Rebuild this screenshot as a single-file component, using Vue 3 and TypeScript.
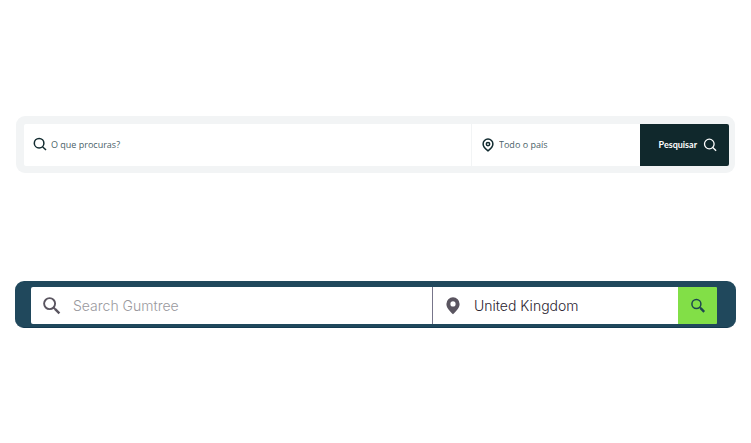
<script setup lang="ts">
import { ref } from 'vue'

const query = ref('')
const region = ref('')
const gumtreeQuery = ref('')
const gumtreeLocation = ref('United Kingdom')
</script>

<template>
  <main class="page">
    <form class="bar bar-light" role="search" @submit.prevent>
      <label class="field">
        <svg class="icon-sm" viewBox="0 0 14 14" aria-hidden="true">
          <circle cx="6.1" cy="5.2" r="4.8" />
          <path d="M9.5 8.7 L13 12" />
        </svg>
        <input v-model="query" type="text" placeholder="O que procuras?" aria-label="O que procuras?" />
      </label>
      <label class="field field-region">
        <svg class="icon-sm" viewBox="0 0 14 14" aria-hidden="true">
          <path d="M7 12.8 C4.5 11 2.1 8.8 2.1 6 A4.9 4.9 0 0 1 11.9 6 C11.9 8.8 9.5 11 7 12.8 Z" />
          <circle cx="7" cy="6.1" r="1.7" />
        </svg>
        <input v-model="region" type="text" placeholder="Todo o país" aria-label="Todo o país" />
      </label>
      <button class="submit" type="submit">
        <span>Pesquisar</span>
        <svg class="icon-sm icon-thin" viewBox="0 0 14 14" aria-hidden="true">
          <circle cx="6.3" cy="6" r="4.8" />
          <path d="M9.8 9.5 L13.1 12.8" />
        </svg>
      </button>
    </form>

    <form class="bar bar-navy" role="search" @submit.prevent>
      <label class="field">
        <svg class="icon-lg" viewBox="0 0 18 18" aria-hidden="true">
          <circle cx="6.6" cy="6.6" r="5.5" />
          <path d="M10.5 10.5 L12 12" />
          <path class="handle" d="M11.9 11.9 L16.4 16.4" />
        </svg>
        <input v-model="gumtreeQuery" type="text" placeholder="Search Gumtree" aria-label="Search Gumtree" />
      </label>
      <label class="field field-region">
        <svg class="icon-pin" viewBox="0 0 14 18" aria-hidden="true">
          <path fill-rule="evenodd" d="M7 0.3 A6.6 6.6 0 0 0 0.4 6.9 C0.4 10.9 4 14.3 7 17.2 C10 14.3 13.6 10.9 13.6 6.9 A6.6 6.6 0 0 0 7 0.3 Z M7 4.3 A2.6 2.6 0 1 1 7 9.5 A2.6 2.6 0 1 1 7 4.3 Z" />
        </svg>
        <input v-model="gumtreeLocation" type="text" aria-label="Location" />
      </label>
      <button class="submit" type="submit" aria-label="Search">
        <svg class="icon-sm" viewBox="0 0 14 14" aria-hidden="true">
          <circle cx="5.4" cy="5" r="4.5" />
          <path d="M8.6 8.2 L10 9.6" />
          <path class="handle" d="M9.6 9.2 L13.2 12.8" />
        </svg>
      </button>
    </form>
  </main>
</template>

<style>
body {
  margin: 0;
  background: #fff;
}
</style>

<style scoped>
.page {
  display: flex;
  flex-direction: column;
  gap: 108px;
  padding: 116px 15px;
}

.bar {
  display: grid;
  box-sizing: border-box;
}

.field {
  display: flex;
  align-items: center;
  min-width: 0;
  background: #fff;
}

input {
  flex: 1;
  min-width: 0;
  padding: 0;
  border: 0;
  outline: 0;
  background: transparent;
  font: inherit;
  color: inherit;
}

.submit {
  display: flex;
  align-items: center;
  justify-content: center;
  padding: 0;
  border: 0;
  font: inherit;
  cursor: pointer;
}

svg {
  flex: none;
  overflow: visible;
  fill: none;
  stroke: currentColor;
}

.icon-sm {
  width: 14px;
  height: 14px;
  stroke-width: 1.5;
}

.icon-thin {
  stroke-width: 1.3;
}

.icon-lg {
  width: 18px;
  height: 18px;
  stroke-width: 1.9;
}

.icon-pin {
  width: 14px;
  height: 18px;
  fill: currentColor;
  stroke: none;
}

.bar-light {
  grid-template-columns: 1fr 169px 89px;
  grid-auto-rows: 42px;
  margin: 0 1px;
  padding: 8px 6px 7px 8px;
  border-radius: 9px;
  background: #f2f4f5;
  color: #122b30;
  font: 9px/14px "Open Sans", "Noto Sans", sans-serif;
}

.bar-light .field {
  gap: 4px;
  padding-left: 9px;
  border-radius: 2px 0 0 2px;
}

.bar-light .field-region {
  border-left: 1px solid #f2f4f5;
  border-radius: 0;
}

.bar-light input::placeholder {
  color: #4a6268;
  opacity: 1;
}

.bar-light .submit {
  justify-content: flex-end;
  gap: 6px;
  padding-right: 12px;
  border-radius: 0 2px 2px 0;
  background: #10282c;
  color: #fff;
  font-family: Lato, "Noto Sans", sans-serif;
  font-weight: 700;
}

.bar-navy {
  grid-template-columns: 1fr 246px 39px;
  grid-auto-rows: 37px;
  padding: 6px 19px 3px 16px;
  border-bottom: 1px solid #153a50;
  border-radius: 9px;
  background: #20485c;
  color: #5a5560;
  font: 300 14px/20px Inter, "Noto Sans", sans-serif;
}

.bar-navy .field {
  gap: 12px;
  padding-left: 12px;
  border-radius: 2px 0 0 2px;
}

.bar-navy .field-region {
  gap: 14px;
  padding-left: 13px;
  border-left: 1px solid #77758a;
  border-radius: 0;
}

.bar-navy input::placeholder {
  color: #9a999e;
  opacity: 1;
}

.bar-navy .field-region input {
  color: #2b2430;
}

.bar-navy .submit {
  border-radius: 0 1px 1px 0;
  background: #82df47;
  color: #1d4650;
}

.bar-navy .handle {
  stroke-width: 2.4;
}
</style>
